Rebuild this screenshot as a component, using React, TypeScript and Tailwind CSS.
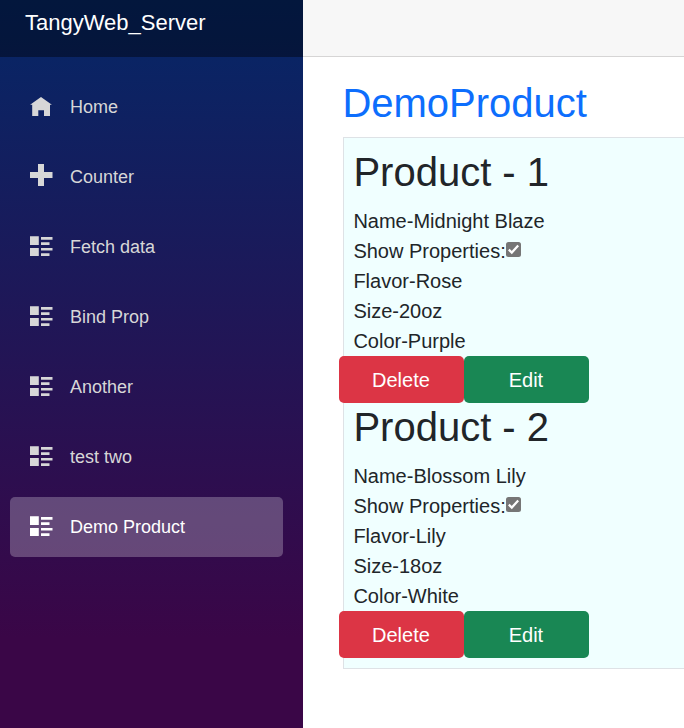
import React from "react";

type IconProps = { className?: string };

function HomeIcon({ className }: IconProps) {
  return (
    <svg className={className} viewBox="0 0 24 24" fill="currentColor">
      <path d="M12 3 L22.9 10.8 H21 V22 H15 V16.3 H9.3 V22 H3.2 V10.8 H1.1 Z" />
    </svg>
  );
}

function PlusIcon({ className }: IconProps) {
  return (
    <svg className={className} viewBox="0 0 24 24" fill="currentColor">
      <path d="M9 0 H15 V8 H23.5 V14 H15 V22 H9 V14 H1 V8 H9 Z" />
    </svg>
  );
}

function ListIcon({ className }: IconProps) {
  return (
    <svg className={className} viewBox="0 0 24 24" fill="currentColor">
      <path d="M1 2.3 H9.8 V11 H1 Z M1 14 H9.8 V22 H1 Z M12 3 H23.5 V5.8 H12 Z M12 8.2 H20.5 V11 H12 Z M12 14 H23.5 V16.5 H12 Z M12 19.2 H20.5 V22 H12 Z" />
    </svg>
  );
}

const navItems = [
  { label: "Home", Icon: HomeIcon },
  { label: "Counter", Icon: PlusIcon },
  { label: "Fetch data", Icon: ListIcon },
  { label: "Bind Prop", Icon: ListIcon },
  { label: "Another", Icon: ListIcon },
  { label: "test two", Icon: ListIcon },
  { label: "Demo Product", Icon: ListIcon, active: true },
];

const products = [
  { id: 1, name: "Midnight Blaze", flavor: "Rose", size: "20oz", color: "Purple" },
  { id: 2, name: "Blossom Lily", flavor: "Lily", size: "18oz", color: "White" },
];

function CheckedBox() {
  return (
    <svg role="checkbox" aria-checked="true" className="mb-[3px] ml-[0.6px] size-[15px] shrink-0" viewBox="0 0 15 15">
      <rect width="15" height="15" rx="2.5" fill="#767676" />
      <path d="M2.8 7.6 L5.8 10.6 L12.2 3.6" fill="none" stroke="#fff" strokeWidth="2.2" />
    </svg>
  );
}

export default function App() {
  return (
    <div className="flex h-[728px] w-full overflow-hidden bg-white font-['Liberation_Sans',Arial,sans-serif] text-xl leading-[30px] text-[#212529]">
      <aside className="h-[910px] w-[303px] shrink-0 bg-[linear-gradient(180deg,rgb(5,39,103)_0%,#3a0647_70%)]">
        <div className="h-[57px] bg-black/40 pt-[6px] pl-[25px] text-[22px] leading-[33px] text-white">
          TangyWeb_Server
        </div>
        <nav className="flex flex-col gap-2.5 pt-5 pr-5 pl-2.5">
          {navItems.map(({ label, Icon, active }) => (
            <a
              key={label}
              className={
                active
                  ? "flex h-[60px] items-center rounded-[5px] bg-white/25 pl-[19px] text-lg text-white"
                  : "flex h-[60px] items-center rounded-[5px] pl-[19px] text-lg text-[#d7d7d7]"
              }
            >
              <Icon className="mr-[17px] mb-[2px] size-6 shrink-0" />
              {label}
            </a>
          ))}
        </nav>
      </aside>
      <main className="min-w-0 grow">
        <div className="h-[57px] border-b border-[#d6d5d5] bg-[#f7f7f7]" />
        <article className="pt-[22px] pl-10">
          <h1 className="-ml-[0.6px] mb-2.5 text-[40px] leading-[48px] text-[#0d6efd]">DemoProduct</h1>
          <section className="border-y border-l border-[#dee2e6] bg-[azure] py-2.5 pl-[9.4px]">
            {products.map((p) => (
              <div key={p.id}>
                <h2 className="mb-2.5 text-[40px] leading-[48px]">Product - {p.id}</h2>
                <p>Name-{p.name}</p>
                <div className="flex items-center">
                  <span>Show Properties:</span>
                  <CheckedBox />
                </div>
                <p>Flavor-{p.flavor}</p>
                <p>Size-{p.size}</p>
                <p>Color-{p.color}</p>
                <div className="-ml-[14.4px] flex">
                  <button className="h-[47px] w-[125px] rounded-[5px] bg-[#dc3545] pr-[1.2px] text-white">Delete</button>
                  <button className="h-[47px] w-[125px] rounded-[5px] bg-[#198754] pr-[1.2px] text-white">Edit</button>
                </div>
              </div>
            ))}
          </section>
        </article>
      </main>
    </div>
  );
}
